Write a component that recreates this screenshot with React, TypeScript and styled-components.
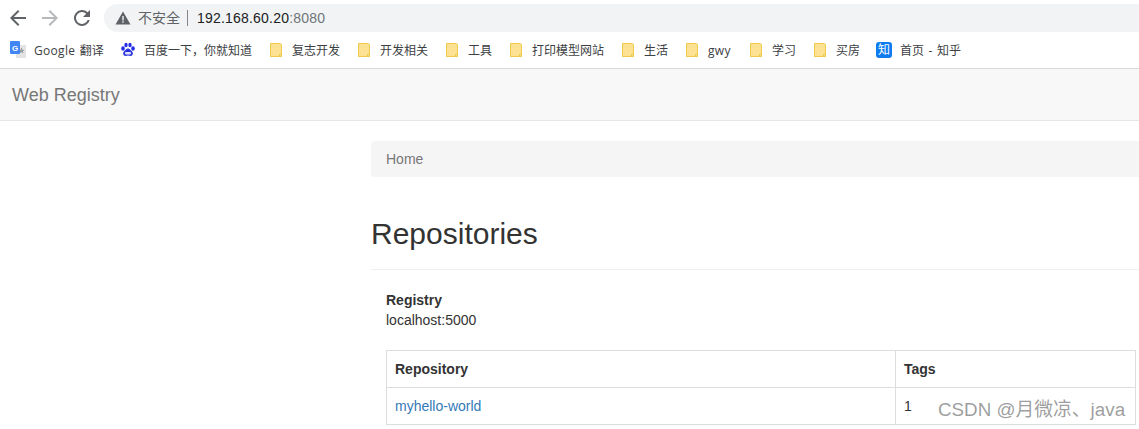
import React from 'react';
import styled, { createGlobalStyle } from 'styled-components';

const Global = createGlobalStyle`
  html, body {
    margin: 0;
    padding: 0;
    background: #fff;
    overflow: hidden;
  }
  body {
    font-family: "Liberation Sans", "Noto Sans CJK SC", sans-serif;
    font-size: 14px;
    color: #333;
  }
`;

const Page = styled.div`
  width: 1139px;
  height: 429px;
  overflow: hidden;
  position: relative;
`;

const Toolbar = styled.div`
  height: 36px;
  display: flex;
  align-items: center;
  padding-left: 6px;
`;

const NavButton = styled.svg`
  width: 24px;
  height: 24px;
  margin-right: 8px;
  flex: none;
`;

const Omnibox = styled.div`
  flex: 1;
  height: 28px;
  margin-left: 2px;
  border-radius: 14px 0 0 14px;
  background: #f1f3f4;
  display: flex;
  align-items: center;
  padding-left: 11px;
`;

const Insecure = styled.span`
  font-size: 14px;
  color: #5f6368;
  margin-left: 7px;
  padding-right: 7px;
  border-right: 1px solid #80868b;
  line-height: 16px;
`;

const Host = styled.span`
  font-size: 14px;
  letter-spacing: 0.2px;
  color: #202124;
  margin-left: 9px;
`;

const Port = styled.span`
  color: #70757a;
`;

const Bookmarks = styled.div`
  box-sizing: border-box;
  height: 33px;
  display: flex;
  align-items: center;
  padding: 0 0 4px 10px;
  border-bottom: 1px solid #d9d9d9;
  box-shadow: 0 1px 1px #ececec;
`;

const Bookmark = styled.div<{ $w: number }>`
  width: ${(p) => p.$w}px;
  flex: none;
  display: flex;
  align-items: center;
  gap: 8px;
  font-family: "Open Sans", "Noto Sans CJK SC", sans-serif;
  font-size: 12px;
  word-spacing: 1.5px;
  color: #3c4043;
  white-space: pre;
`;

const Latin = styled.span`
  letter-spacing: 0.3px;
`;

const ZhihuIcon = styled.span`
  width: 16px;
  height: 16px;
  border-radius: 3px;
  background: #0f7bf0;
  color: #fff;
  font-size: 12px;
  line-height: 16px;
  text-align: center;
  flex: none;
`;

const Navbar = styled.div`
  height: 52px;
  box-sizing: border-box;
  padding: 1px 0 0 12px;
  background: #f8f8f8;
  border-bottom: 1px solid #e7e7e7;
  display: flex;
  align-items: center;
  font-size: 18px;
  color: #777;
`;

const Content = styled.main`
  margin-left: 371px;
  padding-top: 20px;
`;

const Breadcrumb = styled.div`
  height: 36px;
  background: #f5f5f5;
  border-radius: 4px 0 0 4px;
  display: flex;
  align-items: center;
  padding-left: 15px;
  color: #777;
`;

const Title = styled.h1`
  margin: 37px 0 0;
  height: 55px;
  font-size: 30px;
  font-weight: 400;
  line-height: 39px;
  color: #333;
  border-bottom: 1px solid #eee;
`;

const Body = styled.div`
  padding: 20px 3px 0 15px;
`;

const Label = styled.div`
  font-weight: 700;
  line-height: 20px;
`;

const Value = styled.div`
  line-height: 20px;
`;

const Table = styled.table`
  width: 750px;
  margin-top: 20px;
  border-collapse: collapse;
  table-layout: fixed;
`;

const Cell = styled.td`
  height: 36px;
  padding: 0 8px;
  border: 1px solid #ddd;
  line-height: 20px;
`;

const Head = styled(Cell).attrs({ as: 'th' })`
  text-align: left;
  font-weight: 700;
`;

const RepoLink = styled.a`
  color: #337ab7;
  text-decoration: none;
`;

const Watermark = styled.div`
  position: absolute;
  left: 938px;
  top: 398px;
  font-size: 18.8px;
  line-height: 24px;
  color: rgba(120, 120, 120, 0.72);
  white-space: nowrap;
`;

const IconSvg = styled.svg`
  flex: none;
`;

const Folder = () => (
  <IconSvg width="16" height="16" viewBox="0 0 16 16">
    <path d="M2.500 1.500h10l1 1v12h-11z" fill="#fde293" stroke="#efc94c" />
    <path d="M11.500 14.500v-2h2" fill="none" stroke="#efc94c" />
  </IconSvg>
);

const Translate = () => (
  <IconSvg width="16" height="18" viewBox="0 0 16 18">
    <rect x="6" y="4" width="10" height="13" fill="#e3e3e3" />
    <path d="M11.500 6.500l1 2.200 2 .2-1.500 1.400.4 2-1.900-1-1.900 1 .4-2L8.500 8.900l2-.2z" fill="#9aa0a6" />
    <rect x="0" y="0" width="10" height="13" rx="1" fill="#4285f4" />
    <text x="5" y="10" fontSize="8" fontWeight="700" fill="#fff" textAnchor="middle" fontFamily="Liberation Sans">G</text>
  </IconSvg>
);

const Baidu = () => (
  <IconSvg width="16" height="16" viewBox="0 0 16 16">
    <g fill="#2932e1">
      <ellipse cx="3" cy="6.500" rx="1.800" ry="2.200" />
      <ellipse cx="6" cy="3" rx="1.700" ry="2.300" />
      <ellipse cx="10" cy="3" rx="1.700" ry="2.300" />
      <ellipse cx="13" cy="6.500" rx="1.800" ry="2.200" />
      <path d="M8 6.500c2 0 2.600 2 4 3 1.500 1.100 1 4.500-1.500 4.500-1 0-1.500-.4-2.500-.4s-1.500.4-2.500.4C3 14 2.500 10.600 4 9.500c1.400-1 2-3 4-3z" />
    </g>
    <rect x="5" y="10" width="6" height="2.500" rx="1" fill="#dfe1fa" />
  </IconSvg>
);

const bookmarks = [
  { label: '复志开发', w: 88 },
  { label: '开发相关', w: 88 },
  { label: '工具', w: 64 },
  { label: '打印模型网站', w: 112 },
  { label: '生活', w: 64 },
  { label: 'gwy', w: 64 },
  { label: '学习', w: 64 },
  { label: '买房', w: 64 },
];

const App: React.FC = () => {
  return (
    <Page>
      <Global />
      <Toolbar>
        <NavButton viewBox="0 0 24 24">
          <path d="M20 11H7.800l5.600-5.600L12 4l-8 8 8 8 1.400-1.400L7.800 13H20z" fill="#5f6368" />
        </NavButton>
        <NavButton viewBox="0 0 24 24">
          <path d="M4 11h12.200l-5.600-5.600L12 4l8 8-8 8-1.400-1.400 5.600-5.600H4z" fill="#b6b9bc" />
        </NavButton>
        <NavButton viewBox="0 0 24 24">
          <path d="M17.650 6.350A8 8 0 1 0 19.730 14h-2.080a6 6 0 1 1-1.410-6.240L13 11h7V4z" fill="#5f6368" />
        </NavButton>
        <Omnibox>
          <svg width="16" height="16" viewBox="0 0 16 16">
            <path d="M8 1.500L15.500 14.500H.5z" fill="#5f6368" />
            <rect x="7.300" y="6" width="1.400" height="4.500" fill="#f1f3f4" />
            <rect x="7.300" y="11.300" width="1.400" height="1.400" fill="#f1f3f4" />
          </svg>
          <Insecure>不安全</Insecure>
          <Host>
            192.168.60.20<Port>:8080</Port>
          </Host>
        </Omnibox>
      </Toolbar>
      <Bookmarks>
        <Bookmark $w={110}>
          <Translate />
          <span>
            <Latin>Google</Latin> 翻译
          </span>
        </Bookmark>
        <Bookmark $w={148}>
          <Baidu />
          百度一下，你就知道
        </Bookmark>
        {bookmarks.map((b) => (
          <Bookmark key={b.label} $w={b.w}>
            <Folder />
            {b.label === 'gwy' ? <Latin>gwy</Latin> : b.label}
          </Bookmark>
        ))}
        <Bookmark $w={100}>
          <ZhihuIcon>知</ZhihuIcon>
          首页 - 知乎
        </Bookmark>
      </Bookmarks>
      <Navbar>Web Registry</Navbar>
      <Content>
        <Breadcrumb>Home</Breadcrumb>
        <Title>Repositories</Title>
        <Body>
          <Label>Registry</Label>
          <Value>localhost:5000</Value>
          <Table>
            <colgroup>
              <col style={{ width: 509 }} />
              <col />
            </colgroup>
            <thead>
              <tr>
                <Head>Repository</Head>
                <Head>Tags</Head>
              </tr>
            </thead>
            <tbody>
              <tr>
                <Cell>
                  <RepoLink href="#">myhello-world</RepoLink>
                </Cell>
                <Cell>1</Cell>
              </tr>
            </tbody>
          </Table>
        </Body>
      </Content>
      <Watermark>CSDN @月微凉、java</Watermark>
    </Page>
  );
};

export default App;
